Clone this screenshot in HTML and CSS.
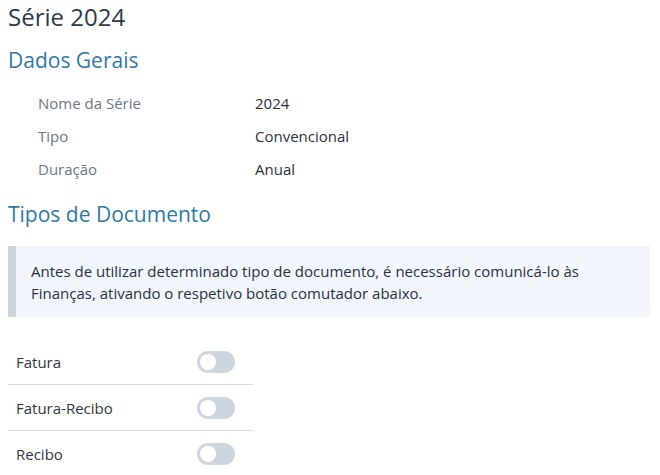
FILE: index.html
```html
<!DOCTYPE html>
<html>
<head lang="pt">
    <meta charset="UTF-8">
    <title>Série 2024</title>
    <link rel="stylesheet" href="styles.css">
</head>
<body>
<div class="page">
    <h1 class="title">Série 2024</h1>

    <h2 class="section">Dados Gerais</h2>
    <dl class="details">
        <div class="details-row">
            <dt>Nome da Série</dt>
            <dd>2024</dd>
        </div>
        <div class="details-row">
            <dt>Tipo</dt>
            <dd>Convencional</dd>
        </div>
        <div class="details-row">
            <dt>Duração</dt>
            <dd>Anual</dd>
        </div>
    </dl>

    <h2 class="section section-docs">Tipos de Documento</h2>
    <div class="notice">
        Antes de utilizar determinado tipo de documento, é necessário comunicá-lo às
        Finanças, ativando o respetivo botão comutador abaixo.
    </div>

    <ul class="doc-list">
        <li class="doc-row">
            <span>Fatura</span>
            <span class="toggle"><span class="knob"></span></span>
        </li>
        <li class="doc-row">
            <span>Fatura-Recibo</span>
            <span class="toggle"><span class="knob"></span></span>
        </li>
        <li class="doc-row">
            <span>Recibo</span>
            <span class="toggle"><span class="knob"></span></span>
        </li>
    </ul>
</div>
</body>
</html>
```

FILE: styles.css
```css
*
{
    margin: 0;
    padding: 0;
    box-sizing: border-box;
}
body
{
    background: #fff;
    font-family: "Open Sans", "Noto Sans", sans-serif;
    font-size: 15px;
    color: #2f3743;
}
.page
{
    padding: 1px 10px 0 8px;
}

.title
{
    font-size: 24px;
    font-weight: 400;
    line-height: 32px;
    color: #2b3a4e;
}
.section
{
    margin-top: 13px;
    font-size: 21px;
    font-weight: 400;
    line-height: 28px;
    color: #2f7aa3;
}
.section-docs
{
    margin-top: 14px;
}

/*----dados gerais----*/
.details
{
    margin-top: 13px;
    padding-left: 30px;
}
.details-row
{
    display: grid;
    grid-template-columns: 217px 1fr;
    line-height: 33px;
}
.details-row dt
{
    color: #6b778a;
}
.details-row dd
{
    color: #2a323d;
}

/*----aviso----*/
.notice
{
    margin-top: 18px;
    padding: 14px 15px 13px 15px;
    border-left: 8px solid #cdd5df;
    background: #f1f6fd;
    line-height: 22px;
    color: #2a323d;
}

/*----lista de documentos----*/
.doc-list
{
    list-style: none;
    width: 245px;
    margin-top: 22px;
}
.doc-row
{
    display: flex;
    align-items: center;
    justify-content: space-between;
    height: 46px;
    padding: 0 18px 0 8px;
    border-bottom: 1px solid #d7d9dc;
}
.doc-row:last-child
{
    border-bottom: none;
}
.toggle
{
    display: flex;
    align-items: center;
    width: 38px;
    height: 22px;
    padding: 0 3px;
    border-radius: 11px;
    background: #cdd5e0;
}
.knob
{
    width: 16px;
    height: 16px;
    border-radius: 50%;
    background: #fff;
}
```
